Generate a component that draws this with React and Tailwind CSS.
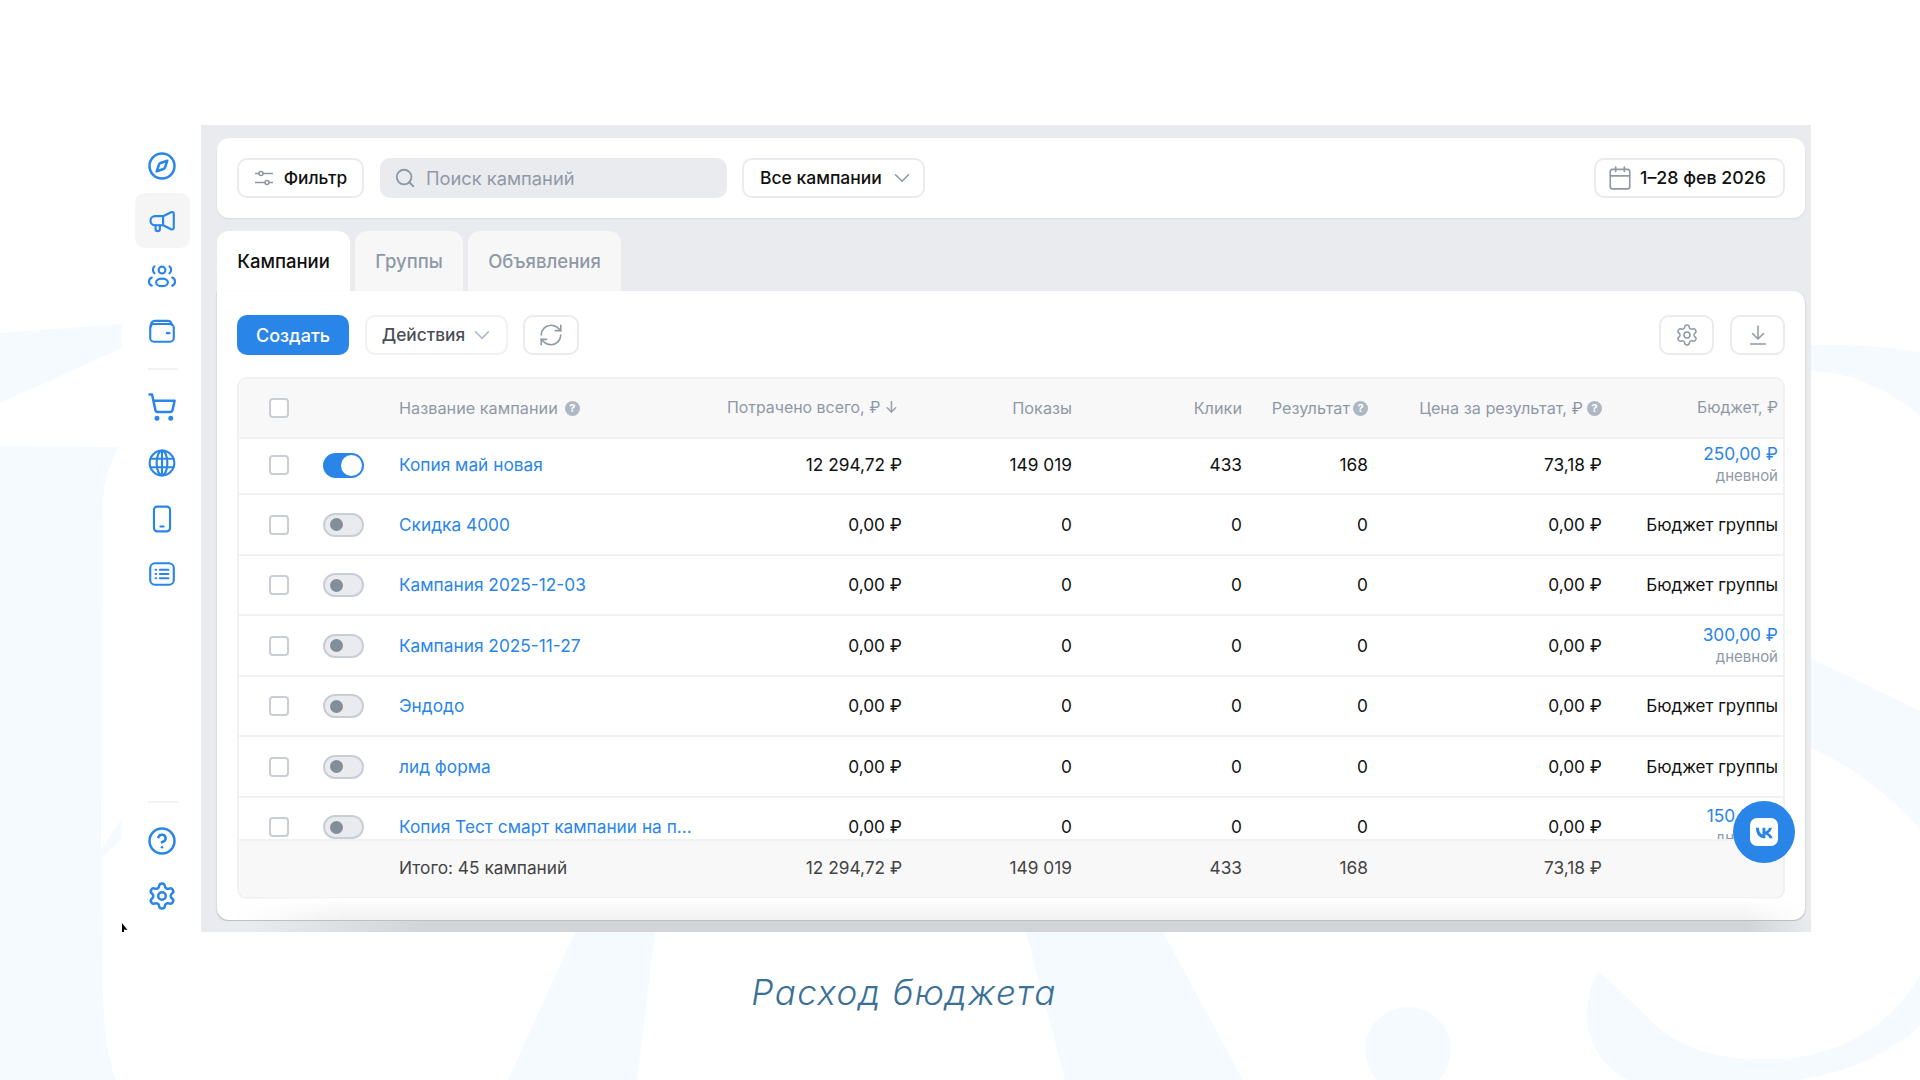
import React from 'react';
import { ChevronDown, Search, RefreshCw, Settings, Calendar, Compass, ShoppingCart, CircleHelp } from 'lucide-react';

const sideClass = 'w-[30px] h-[30px] text-[#2a85e9] -translate-x-px';

const rows = [
  { name: 'Копия май новая', on: true, spent: '12 294,72 ₽', shows: '149 019', clicks: '433', result: '168', price: '73,18 ₽', budget: '250,00 ₽', first: true },
  { name: 'Скидка 4000' },
  { name: 'Кампания 2025-12-03' },
  { name: 'Кампания 2025-11-27', budget: '300,00 ₽' },
  { name: 'Эндодо' },
  { name: 'лид форма' },
  { name: 'Копия Тест смарт кампании на п...', budget: '150,00 ₽' },
];

// small filled "?" used in the table header
const Hint = () => (
  <span className="inline-flex items-center justify-center w-[15px] h-[15px] rounded-full bg-[#aeb8c4] text-white text-[11px] font-bold leading-none">?</span>
);

const Checkbox = () => (
  <div className="w-[20px] h-[20px] rounded-[4px] border-2 border-[#c9ced6] bg-white"></div>
);

const Toggle = ({ on }) => (
  on ? (
    <div className="w-[41px] h-[25px] rounded-full bg-[#2a85e9] flex items-center justify-end pr-[2px]">
      <div className="w-[21px] h-[21px] rounded-full bg-white"></div>
    </div>
  ) : (
    <div className="w-[41px] h-[24px] rounded-full bg-[#e9ebef] border-2 border-[#c9ced6] flex items-center pl-[5px]">
      <div className="w-[13px] h-[13px] rounded-full bg-[#838e9b]"></div>
    </div>
  )
);

const Row = ({ row }) => (
  <div className={`flex items-center border-b-2 border-[#f0f1f3] text-[17.3px] text-[#111] ${row.first ? 'h-[56px] pb-[2px]' : 'h-[60.5px] pt-[1px]'}`}>
    <div className="w-[84px] pl-[30px] shrink-0"><Checkbox /></div>
    <div className="w-[76px] shrink-0"><Toggle on={row.on} /></div>
    <div className="w-[312px] shrink-0 text-[#2a85e9] truncate">{row.name}</div>
    <div className="w-[191px] shrink-0 text-right">{row.spent || '0,00 ₽'}</div>
    <div className="w-[170px] shrink-0 text-right">{row.shows || '0'}</div>
    <div className="w-[170px] shrink-0 text-right">{row.clicks || '0'}</div>
    <div className="w-[126px] shrink-0 text-right">{row.result || '0'}</div>
    <div className="w-[234px] shrink-0 text-right">{row.price || '0,00 ₽'}</div>
    <div className="w-[176px] shrink-0 text-right leading-[22px]">
      {row.budget ? (
        <div>
          <div className="text-[#2a85e9]">{row.budget}</div>
          <div className="text-[15px] text-[#8f99a6] leading-[22px]">дневной</div>
        </div>
      ) : <span className="text-[17px]">Бюджет группы</span>}
    </div>
  </div>
);

const App = () => {
  return (
    <div className="relative w-[1920px] h-[1080px] bg-white overflow-hidden font-['Inter',sans-serif]">
      {/* pale background shapes */}
      <svg className="absolute inset-0" width="1920" height="1080" viewBox="0 0 1920 1080" fill="#f5faff">
        <path d="M0 333L122 324V348L0 403Z" />
        <path d="M0 446L118 447C108 470 103 480 102 520L101 850L122 818V838L101 858L103 1000C105 1040 110 1065 116 1080H0Z" />
        <path d="M575 932H655L637 1080H508Z" />
        <path d="M1026 932H1163L1243 1080H1065Z" />
        <circle cx="1408" cy="1050" r="43" />
        <path d="M1811 345C1850 344 1890 347 1920 352V416C1890 390 1850 372 1811 371Z" />
        <path d="M1811 658L1920 711V829C1890 795 1850 765 1811 748Z" />
        <path d="M1598 972C1590 985 1587 1000 1587 1015C1587 1040 1600 1065 1628 1080H1800C1850 1072 1890 1052 1920 1026V975C1890 1030 1830 1060 1769 1059C1720 1060 1680 1050 1650 1020C1630 1000 1610 980 1598 972Z" />
      </svg>

      <div className="absolute left-[135px] top-[125px] w-[1676px] h-[807px] flex">
        {/* sidebar */}
        <div className="w-[66px] h-full bg-white flex flex-col items-start shrink-0 pb-[21px]">
          <div className="w-[55px] flex flex-col items-center">
            <div className="h-[55px] w-[55px] flex items-center justify-center mt-[13px]"><Compass className={sideClass} strokeWidth={2} /></div>
            <div className="h-[55px] w-[55px] flex items-center justify-center bg-[#f5f5f6] rounded-[10px]">
              <svg className={sideClass} viewBox="0 0 28 28" fill="none" stroke="currentColor" strokeWidth="2" strokeLinejoin="round" strokeLinecap="round">
                <path d="M15 9.500L22.500 5.800Q25 5 25 7.500V20Q25 22.500 22.500 21.700L15 18H7.500A4.250 4.250 0 0 1 7.500 9.500ZM15 9.500V18" />
                <path d="M8 18V21.500A2 2 0 0 0 12 21.500V18" />
              </svg>
            </div>
            <div className="h-[55px] w-[55px] flex items-center justify-center">
              <svg className={sideClass} viewBox="0 0 28 28" fill="none" stroke="currentColor" strokeWidth="2" strokeLinecap="round">
                <circle cx="14" cy="8.500" r="3.200" />
                <ellipse cx="14" cy="20" rx="5.500" ry="3.500" />
                <path d="M7 5C5 6.200 5 10 7 11.500M21 5C23 6.200 23 10 21 11.500M4.500 15.500C1 17 1 21.500 4.500 23M23.500 15.500C27 17 27 21.500 23.500 23" />
              </svg>
            </div>
            <div className="h-[56px] w-[55px] flex items-center justify-center">
              <svg className={sideClass} viewBox="0 0 28 28" fill="none" stroke="currentColor" strokeWidth="2" strokeLinecap="round">
                <rect x="3" y="7.500" width="22" height="16.500" rx="3.500" />
                <path d="M3.500 10C3.500 6 5 4.500 7.500 4.500H19.500C21.500 4.500 22.800 6 23 8" />
                <path d="M18.500 16H21" />
              </svg>
            </div>
            <div className="w-[30px] h-[2px] bg-[#f1f2f4] my-[9px]"></div>
            <div className="h-[56px] w-[55px] flex items-center justify-center"><ShoppingCart className={sideClass} strokeWidth={2} /></div>
            <div className="h-[56px] w-[55px] flex items-center justify-center">
              <svg className={sideClass} viewBox="0 0 28 28" fill="none" stroke="currentColor" strokeWidth="2">
                <circle cx="14" cy="14" r="11.500" />
                <ellipse cx="14" cy="14" rx="5" ry="11.500" />
                <path d="M14 2.500V25.500M3.800 10H24.200M3.800 18H24.200" />
              </svg>
            </div>
            <div className="h-[55px] w-[55px] flex items-center justify-center">
              <svg className={sideClass} viewBox="0 0 28 28" fill="none" stroke="currentColor" strokeWidth="2" strokeLinecap="round">
                <rect x="6.500" y="2.500" width="15" height="23" rx="3" />
                <path d="M12.500 21H15.500" />
              </svg>
            </div>
            <div className="h-[56px] w-[55px] flex items-center justify-center">
              <svg className={sideClass} viewBox="0 0 28 28" fill="none" stroke="currentColor" strokeWidth="2" strokeLinecap="round">
                <rect x="3" y="4" width="22" height="20" rx="4.500" />
                <path d="M12 10H20M12 14H20M12 18H20M8 10H8.500M8 14H8.500M8 18H8.500" />
              </svg>
            </div>
          </div>
          <div className="mt-auto w-[55px] flex flex-col items-center">
            <div className="w-[30px] h-[2px] bg-[#f1f2f4] mb-[23px]"></div>
            <CircleHelp className={`${sideClass} mb-[25px]`} strokeWidth={2} />
            <Settings className={sideClass} strokeWidth={2} />
          </div>
        </div>

        {/* main */}
        <div className="relative flex-1 bg-[#e9ebef] pt-[13px] pl-[16px] pr-[6px] overflow-hidden">
          <div className="h-[80px] bg-white rounded-[12px] flex items-center px-[20px] shadow-[0_1px_2px_rgba(0,0,0,0.08)]">
            <div className="h-[40px] w-[127px] rounded-[10px] border-2 border-[#e9ebef] flex items-center justify-center gap-[10px] text-[17.3px] font-medium text-[#111]">
              <svg className="w-[20px] h-[20px] text-[#8f99a6]" viewBox="0 0 20 20" fill="none" stroke="currentColor" strokeWidth="1.500">
                <path d="M1 5.500H5M9 5.500H19M1 14.500H11M15 14.500H19" />
                <circle cx="7" cy="5.500" r="2" />
                <circle cx="13" cy="14.500" r="2" />
              </svg>
              <span>Фильтр</span>
            </div>
            <div className="h-[40px] w-[347px] ml-[16px] rounded-[10px] bg-[#e9ebef] flex items-center px-[14px] gap-[10px] text-[18.300px] text-[#8f99a6]">
              <Search className="w-[22px] h-[22px] text-[#8f99a6]" strokeWidth={2} />
              <span className="pt-[1px]">Поиск кампаний</span>
            </div>
            <div className="h-[40px] w-[183px] ml-[15px] rounded-[10px] border-2 border-[#e9ebef] flex items-center justify-between pl-[16px] pr-[8px] text-[17.500px] font-medium text-[#111]">
              <span>Все кампании</span>
              <ChevronDown className="w-[26px] h-[26px] text-[#8f99a6]" strokeWidth={1.500} />
            </div>
            <div className="ml-auto h-[40px] w-[191px] rounded-[10px] border-2 border-[#e9ebef] flex items-center pl-[11px] gap-[7px] text-[17.800px] font-medium text-[#111]">
              <Calendar className="w-[26px] h-[26px] text-[#8f99a6]" strokeWidth={1.500} />
              <span>1–28 фев 2026</span>
            </div>
          </div>

          <div className="flex gap-[5px] mt-[13px] h-[60px] pt-0 text-[18.500px] font-medium">
            <div className="w-[133px] pt-[2px] rounded-t-[12px] bg-white flex items-center justify-center text-[#111]">Кампании</div>
            <div className="w-[108px] pt-[2px] rounded-t-[12px] bg-[#f7f7f8] flex items-center justify-center text-[#8f99a6]">Группы</div>
            <div className="w-[153px] pt-[2px] rounded-t-[12px] bg-[#f7f7f8] flex items-center justify-center text-[#8f99a6]">Объявления</div>
          </div>

          <div className="h-[629px] bg-white rounded-b-[12px] rounded-tr-[12px] px-[20px] pt-[24px] relative shadow-[0_1px_2px_rgba(0,0,0,0.25)]">
            <div className="flex items-center h-[40px]">
              <div className="h-[40px] w-[112px] rounded-[10px] bg-[#2a85e9] flex items-center justify-center text-white text-[18px] font-medium">Создать</div>
              <div className="h-[40px] w-[143px] ml-[16px] rounded-[10px] border-2 border-[#f0f1f3] flex items-center justify-center gap-[4px] pl-[4px] text-[17.300px] font-medium text-[#4a4f57]">
                <span>Действия</span>
                <ChevronDown className="w-[26px] h-[26px] text-[#aeb8c4]" strokeWidth={1.500} />
              </div>
              <div className="h-[40px] w-[56px] ml-[15px] rounded-[10px] border-2 border-[#e9ebef] flex items-center justify-center">
                <RefreshCw className="w-[26px] h-[26px] text-[#8f99a6]" strokeWidth={1.500} />
              </div>
              <div className="ml-auto h-[40px] w-[55px] rounded-[10px] border-2 border-[#e9ebef] flex items-center justify-center">
                <Settings className="w-[24px] h-[24px] text-[#8f99a6]" strokeWidth={1.500} />
              </div>
              <div className="h-[40px] w-[55px] ml-[16px] rounded-[10px] border-2 border-[#e9ebef] flex items-center justify-center">
                <svg className="w-[22px] h-[22px] text-[#8f99a6]" viewBox="0 0 22 22" fill="none" stroke="currentColor" strokeWidth="1.500" strokeLinecap="round" strokeLinejoin="round">
                  <path d="M11 2V15M5.500 9.500L11 15L16.500 9.500M3.500 20H18.500" />
                </svg>
              </div>
            </div>

            <div className="mt-[22px] h-[522px] rounded-[10px] border-2 border-[#f0f1f3] overflow-hidden flex flex-col">
              <div className="h-[60px] shrink-0 bg-[#f8f8f9] flex items-center border-b-2 border-[#f0f1f3] text-[16.250px] text-[#8f99a6]">
                <div className="w-[84px] pl-[30px] shrink-0"><Checkbox /></div>
                <div className="w-[76px] shrink-0"></div>
                <div className="w-[312px] shrink-0 flex items-center gap-[7px]"><span>Название кампании</span><Hint /></div>
                <div className="w-[191px] shrink-0 flex justify-end pr-[4px] whitespace-nowrap text-[15.900px]">Потрачено всего, ₽ ↓</div>
                <div className="w-[170px] shrink-0 text-right">Показы</div>
                <div className="w-[170px] shrink-0 text-right">Клики</div>
                <div className="w-[126px] shrink-0 flex justify-end items-center gap-[3px]"><span>Результат</span><Hint /></div>
                <div className="w-[234px] shrink-0 flex justify-end items-center gap-[4px] whitespace-nowrap"><span>Цена за результат, ₽</span><Hint /></div>
                <div className="w-[176px] shrink-0 text-right text-[15.700px]">Бюджет, ₽</div>
              </div>
              <div className="h-[400px] overflow-hidden">
                {rows.map((row) => <Row key={row.name} row={row} />)}
              </div>
              <div className="flex-1 bg-[#f8f8f9] border-t-2 border-[#f0f1f3] flex items-center pb-[2px] text-[17.300px] text-[#444]">
                <div className="w-[160px] shrink-0"></div>
                <div className="w-[312px] shrink-0">Итого: 45 кампаний</div>
                <div className="w-[191px] shrink-0 text-right">12 294,72 ₽</div>
                <div className="w-[170px] shrink-0 text-right">149 019</div>
                <div className="w-[170px] shrink-0 text-right">433</div>
                <div className="w-[126px] shrink-0 text-right">168</div>
                <div className="w-[234px] shrink-0 text-right">73,18 ₽</div>
              </div>
            </div>

            {/* soft haze at the bottom of the card */}
            <div className="absolute left-0 right-0 bottom-0 h-[22px] rounded-b-[12px] bg-gradient-to-b from-white to-[#f1f1f2] [mask-image:linear-gradient(90deg,transparent_1%,black_8%,black_96%,transparent)]"></div>
          </div>

          {/* darker strip under the card */}
          <div className="absolute left-0 right-0 bottom-0 h-[11px] bg-[linear-gradient(90deg,#e9ebef_3%,#d3d4d8_14%,#d3d4d8_96%,#e9ebef_100%)]"></div>

          {/* VK chat button */}
          <div className="absolute left-[1532px] top-[676px] w-[62px] h-[62px] rounded-full bg-[#2a85e9] flex items-center justify-center">
            <div className="w-[28px] h-[28px] rounded-[7px] bg-white flex items-center justify-center">
              <svg viewBox="0 0 24 24" className="w-[23px] h-[23px]" fill="#2a85e9">
                <path d="M3 7h3.200c.1 4.600 2.100 6.500 3.700 6.900V7h3v3.900c1.600-.2 3.300-2 3.900-3.900h3c-.5 2.800-2.500 4.800-3.900 5.600 1.400.7 3.700 2.400 4.600 5.400h-3.300c-.7-2.200-2.400-3.800-4.300-4v4h-.4C7 18 3.200 14.300 3 7z" />
              </svg>
            </div>
          </div>
        </div>
      </div>

      {/* cursor artifact */}
      <svg className="absolute left-[122px] top-[923px]" width="6" height="9" viewBox="0 0 6 9" fill="#000">
        <path d="M0 0L0 9H2V6.500L5.500 7Z" />
      </svg>

      <div className="absolute left-0 w-[1808px] top-[970px] text-center text-[35px] italic font-light tracking-[1.4px] text-[#3b7097] leading-[44px]">Расход бюджета</div>
    </div>
  );
};

export default App;
